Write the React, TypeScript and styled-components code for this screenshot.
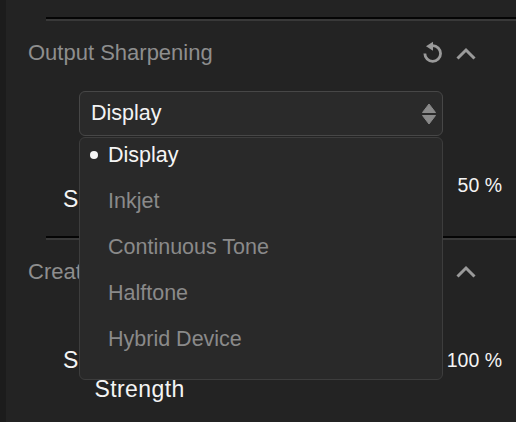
import React from "react";
import styled, { createGlobalStyle } from "styled-components";

const GlobalStyle = createGlobalStyle`
  html, body {
    margin: 0;
    padding: 0;
    background: #232323;
  }
  body {
    font-family: "Liberation Sans", Arial, Helvetica, sans-serif;
    -webkit-font-smoothing: antialiased;
  }
`;

const Frame = styled.div`
  display: flex;
  width: 516px;
  height: 422px;
  overflow: hidden;
  background: #232323;
`;

const Rail = styled.div`
  flex: none;
  width: 6px;
  background: #1c1c1c;
`;

const Panel = styled.div`
  flex: 1;
  display: flex;
  flex-direction: column;
  padding-top: 17px;
`;

const Divider = styled.div`
  margin-left: 40px;
  height: 0;
  border-top: 2px solid #050505;
  border-bottom: 2px solid #393939;
`;

const Section = styled.section`
  display: flex;
  flex-direction: column;
  padding: 0 14px 0 22px;
`;

const Header = styled.div`
  display: flex;
  align-items: flex-start;
  padding-top: 19px;
  height: 26px;
`;

const Title = styled.h3`
  flex: 1;
  margin: 0;
  font-size: 22px;
  line-height: 26px;
  font-weight: 400;
  color: #8e8e8e;
  white-space: nowrap;
`;

const IconButton = styled.button<{ $top: number; $gap?: number }>`
  display: flex;
  padding: 0;
  margin: ${(p) => p.$top}px 0 0 ${(p) => p.$gap ?? 0}px;
  border: 0;
  background: none;
  color: #9a9a9a;
  cursor: pointer;
`;

const HeaderTools = styled.div`
  display: flex;
  align-items: flex-start;
  margin-right: 25px;
`;

const SelectWrap = styled.div`
  position: relative;
  margin: 25px 0 0 51px;
  width: 364px;
`;

const SelectBox = styled.div`
  box-sizing: border-box;
  display: flex;
  align-items: center;
  height: 45px;
  padding: 0 5px 0 11px;
  border: 1px solid #474747;
  border-radius: 6px;
  background: #2a2a2a;
  color: #f3f3f3;
  font-size: 21.5px;
`;

const SelectValue = styled.span`
  flex: 1;
`;

const Menu = styled.ul`
  position: absolute;
  z-index: 2;
  top: calc(100% + 1px);
  left: 0;
  box-sizing: border-box;
  width: 100%;
  height: 243px;
  margin: 0;
  padding: 2px 0 0;
  list-style: none;
  display: flex;
  flex-direction: column;
  gap: 16px;
  border: 1px solid #3d3d3d;
  border-radius: 6px;
  background: #292929;
`;

const MenuItem = styled.li<{ $active?: boolean }>`
  display: flex;
  align-items: center;
  height: 30px;
  padding-left: 10px;
  font-size: 21.5px;
  color: ${(p) => (p.$active ? "#f5f5f5" : "#8a8a8a")};
`;

const BulletSlot = styled.span`
  flex: none;
  display: flex;
  align-items: center;
  width: 18px;
`;

const Bullet = styled.span`
  width: 8px;
  height: 8px;
  border-radius: 50%;
  background: #f5f5f5;
`;

const SliderRow = styled.div<{ $height: number }>`
  display: flex;
  align-items: flex-start;
  height: ${(p) => p.$height}px;
  padding-left: 35px;
`;

const Label = styled.div<{ $top: number }>`
  flex: none;
  margin-top: ${(p) => p.$top}px;
  font-size: 23px;
  line-height: 28.5px;
  letter-spacing: 0.4px;
  text-align: right;
  color: #f4f4f4;
`;

const LabelLine = styled.span`
  display: block;
`;

const Track = styled.div<{ $top: number }>`
  position: relative;
  flex: 1;
  height: 4px;
  margin: ${(p) => p.$top}px 18px 0 18px;
  border-radius: 2px;
  background: #4a4a4a;
`;

const Value = styled.div<{ $top: number }>`
  flex: none;
  margin-top: ${(p) => p.$top}px;
  font-size: 19.5px;
  line-height: 23px;
  color: #f4f4f4;
`;

const ResetIcon = () => (
  <svg width="21" height="22" viewBox="0 0 21 22" aria-hidden="true">
    <path
      d="M10.7 4.7 A7.85 7.85 0 1 1 2.85 12.55"
      fill="none"
      stroke="currentColor"
      strokeWidth="2.8"
    />
    <path d="M4 5.3 L11 0.8 L11 9.8 Z" fill="currentColor" />
  </svg>
);

const ChevronUp = () => (
  <svg width="22" height="14" viewBox="0 0 22 14" aria-hidden="true">
    <polyline
      points="2.5,11.5 11,3 19.5,11.5"
      fill="none"
      stroke="currentColor"
      strokeWidth="3"
    />
  </svg>
);

const Stepper = () => (
  <svg width="16" height="24" viewBox="0 0 16 24" aria-hidden="true">
    <path d="M8 2 L14.5 10.5 L1.5 10.5 Z" fill="#8a8a8a" stroke="#8a8a8a" strokeWidth="1" strokeLinejoin="round" />
    <path d="M1.5 13.5 L14.5 13.5 L8 22 Z" fill="#8a8a8a" stroke="#8a8a8a" strokeWidth="1" strokeLinejoin="round" />
  </svg>
);

const options = ["Display", "Inkjet", "Continuous Tone", "Halftone", "Hybrid Device"];

export default function App() {
  const selected = "Display";
  return (
    <>
      <GlobalStyle />
      <Frame>
        <Rail />
        <Panel>
          <Divider />
          <Section>
            <Header>
              <Title>Output Sharpening</Title>
              <HeaderTools>
                <IconButton $top={1} aria-label="Reset">
                  <ResetIcon />
                </IconButton>
                <IconButton $top={7} $gap={12} aria-label="Collapse">
                  <ChevronUp />
                </IconButton>
              </HeaderTools>
            </Header>
            <SelectWrap>
              <SelectBox>
                <SelectValue>{selected}</SelectValue>
                <Stepper />
              </SelectBox>
              <Menu role="listbox">
                {options.map((o) => (
                  <MenuItem key={o} $active={o === selected} role="option">
                    <BulletSlot>{o === selected && <Bullet />}</BulletSlot>
                    {o}
                  </MenuItem>
                ))}
              </Menu>
            </SelectWrap>
            <SliderRow $height={100}>
              <Label $top={49}>Sharpening</Label>
              <Track $top={60} />
              <Value $top={38}>50 %</Value>
            </SliderRow>
          </Section>
          <Divider />
          <Section>
            <Header>
              <Title>Creative Sharpening</Title>
              <HeaderTools>
                <IconButton $top={6} aria-label="Collapse">
                  <ChevronUp />
                </IconButton>
              </HeaderTools>
            </Header>
            <SliderRow $height={120}>
              <Label $top={61}>
                <LabelLine>Sharpening</LabelLine>
                <LabelLine>Strength</LabelLine>
              </Label>
              <Track $top={75} />
              <Value $top={64}>100 %</Value>
            </SliderRow>
          </Section>
        </Panel>
      </Frame>
    </>
  );
}
